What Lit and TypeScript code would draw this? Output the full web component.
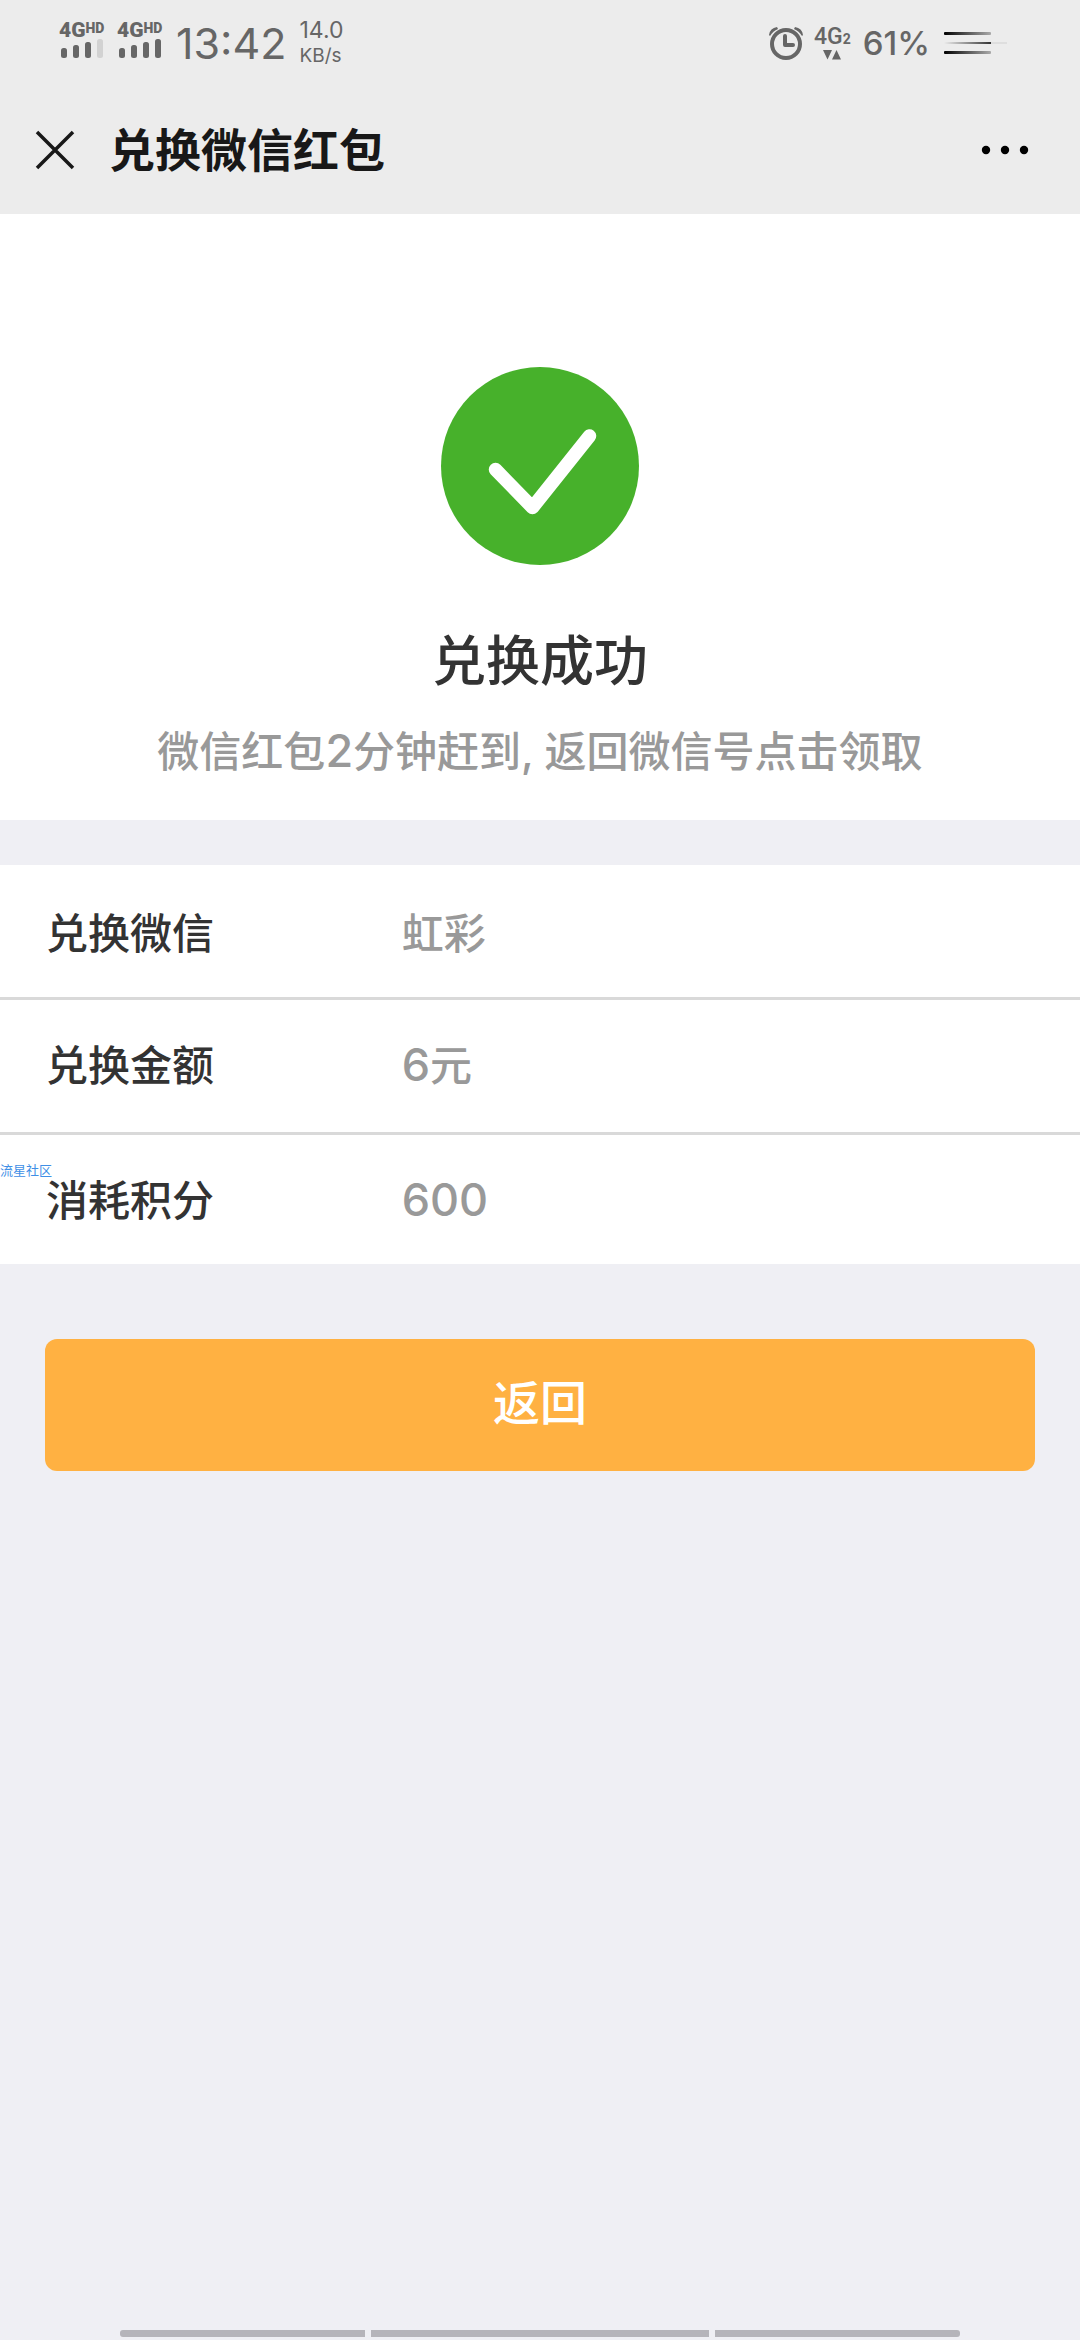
import { LitElement, html, css, svg } from "lit";
import { customElement, property } from "lit/decorators.js";

interface Detail {
  label: string;
  value: string;
  unit?: string;
  numeric?: boolean;
}

const DETAILS: Detail[] = [
  { label: "兑换微信", value: "虹彩" },
  { label: "兑换金额", value: "6", unit: "元", numeric: true },
  { label: "消耗积分", value: "600", numeric: true },
];

const BARS = [10, 13, 16, 19];

@customElement("signal-meter")
export class SignalMeter extends LitElement {
  @property({ type: Number }) level = 4;

  static styles = css`
    :host {
      display: block;
      color: #666;
      font-family: Roboto, sans-serif;
      font-weight: 900;
    }
    .net {
      display: flex;
      align-items: flex-start;
      height: 16px;
      font-size: 21px;
      line-height: 16px;
    }
    .hd {
      font-size: 14px;
      line-height: 12px;
    }
    svg {
      display: block;
    }
  `;

  render() {
    return html`
      <div class="net"><span>4G</span><span class="hd">HD</span></div>
      <svg width="46" height="20" viewBox="0 0 46 20" aria-hidden="true">
        ${BARS.map(
          (h, i) => svg`<rect x=${2 + i * 12} y=${20 - h} width="6" height=${h} rx="2.5"
            fill=${i < this.level ? "#666" : "#d2d2d2"}></rect>`
        )}
      </svg>
    `;
  }
}

@customElement("status-bar")
export class StatusBar extends LitElement {
  static styles = css`
    :host {
      display: flex;
      justify-content: space-between;
      height: 86px;
      box-sizing: border-box;
      padding: 0 73px 0 59px;
      color: #666;
      font-family: Inter, sans-serif;
      font-weight: 400;
    }
    .side {
      display: flex;
      align-items: center;
    }
    .meters {
      display: flex;
      gap: 12px;
      padding-bottom: 7px;
    }
    .time {
      margin-left: 13px;
      font-size: 43px;
      line-height: 44px;
    }
    .speed {
      display: flex;
      flex-direction: column;
      margin-left: 13px;
      font-size: 23px;
      line-height: 26px;
    }
    .unit {
      font-size: 19px;
    }
    .data {
      display: flex;
      flex-direction: column;
      align-items: center;
      margin: 0 12px 0 10px;
      font-family: Roboto, sans-serif;
      font-weight: 500;
      font-size: 23px;
      line-height: 22px;
    }
    .sub {
      font-size: 14px;
      font-weight: 700;
    }
    .percent {
      margin-right: 14px;
      font-size: 33px;
      line-height: 40px;
      font-weight: 500;
    }
    svg {
      display: block;
    }
  `;

  render() {
    return html`
      <div class="side">
        <div class="meters">
          <signal-meter .level=${3}></signal-meter>
          <signal-meter .level=${4}></signal-meter>
        </div>
        <span class="time">13:42</span>
        <div class="speed"><span>14.0</span><span class="unit">KB/s</span></div>
      </div>
      <div class="side">
        <svg width="36" height="36" viewBox="0 0 36 36" fill="none" stroke="#666" role="img" aria-label="闹钟">
          <circle cx="18" cy="19" r="14" stroke-width="4"></circle>
          <path d="M17 11v9h8" stroke-width="4" stroke-linejoin="round" stroke-linecap="round"></path>
          <path d="M1 10Q2 3 9 2L10 4Q5 6 2 11Z M35 10Q34 3 27 2L26 4Q31 6 34 11Z" fill="#666" stroke="none"></path>
        </svg>
        <div class="data">
          <span>4G<span class="sub">2</span></span>
          <svg width="18" height="10" viewBox="0 0 18 10" fill="#666" aria-hidden="true">
            <path d="M0 0h9L4.500 9.500Z M9 9.500h9L13.500 0Z"></path>
          </svg>
        </div>
        <span class="percent">61%</span>
        <svg width="63" height="24" viewBox="0 0 63 24" aria-hidden="true">
          <defs>
            <linearGradient id="edge"><stop stop-color="#000"></stop><stop offset="1" stop-color="#aaa"></stop></linearGradient>
            <linearGradient id="mid"><stop stop-color="#ececec"></stop><stop offset="1" stop-color="#333"></stop></linearGradient>
          </defs>
          <rect x="0" y="1" width="47" height="3" rx="1" fill="url(#edge)"></rect>
          <rect x="0" y="11" width="47" height="2" fill="url(#mid)"></rect>
          <rect x="47" y="11" width="16" height="2" fill="#dedede"></rect>
          <rect x="0" y="20" width="47" height="3" rx="1" fill="url(#edge)"></rect>
        </svg>
      </div>
    `;
  }
}

@customElement("app-root")
export class AppRoot extends LitElement {
  static styles = css`
    :host {
      display: flex;
      flex-direction: column;
      min-height: 100vh;
      background: #efeff4;
      color: #333;
      font-family: Inter, "Noto Sans CJK SC", sans-serif;
      font-size: 42px;
      font-weight: 500;
      line-height: 60px;
    }
    button {
      border: 0;
      padding: 0;
      background: none;
      font: inherit;
      color: inherit;
    }
    svg {
      display: block;
    }
    .top {
      background: #ececec;
    }
    .bar {
      display: flex;
      align-items: center;
      height: 128px;
      padding: 0 51px 0 35px;
    }
    h1,
    h2,
    p,
    dl,
    dd {
      margin: 0;
    }
    h1 {
      flex: 1;
      margin-left: 34px;
      color: #181818;
      font-size: 46px;
      font-weight: 700;
    }
    .result {
      display: flex;
      flex-direction: column;
      align-items: center;
      padding: 153px 40px 38px;
      background: #fff;
      text-align: center;
    }
    h2 {
      margin-top: 57px;
      font-size: 54px;
      line-height: 80px;
      font-weight: 500;
    }
    .note {
      margin-top: 20px;
      color: #999;
    }
    .num {
      font-size: 45px;
      line-height: 1;
    }
    .details {
      position: relative;
      margin-top: 45px;
      background: #fff;
    }
    .row {
      display: grid;
      grid-template-columns: 36% 1fr;
      align-items: center;
      padding: 36px 46px;
      border-bottom: 3px solid #d9d9d9;
    }
    .row:first-child {
      padding-top: 39px;
      padding-bottom: 33px;
    }
    .row:last-child {
      padding-bottom: 33px;
      border-bottom: 0;
    }
    dd {
      color: #999;
    }
    .tag {
      position: absolute;
      left: 0;
      top: 296px;
      color: #3f8fe6;
      font-size: 13px;
      line-height: 18px;
      font-weight: 400;
    }
    .actions {
      display: flex;
      padding: 75px 45px;
    }
    .back {
      flex: 1;
      padding: 28px 0 32px;
      border-radius: 12px;
      background: #ffb142;
      color: #fff;
      font-size: 47px;
      line-height: 72px;
    }
    .nav {
      display: grid;
      grid-template-columns: 245fr 338fr 245fr;
      gap: 6px;
      margin-top: auto;
      padding: 0 120px 3px;
    }
    .nav span {
      height: 7px;
      background: #b5b4ba;
    }
    .nav span:first-child {
      border-radius: 3px 0 0 3px;
    }
    .nav span:last-child {
      border-radius: 0 3px 3px 0;
    }
  `;

  render() {
    return html`
      <header class="top">
        <status-bar></status-bar>
        <div class="bar">
          <button aria-label="关闭">
            <svg width="40" height="40" viewBox="0 0 40 40" stroke="#181818" stroke-width="3.500">
              <path d="M2 2L38 38M38 2L2 38"></path>
            </svg>
          </button>
          <h1>兑换微信红包</h1>
          <button aria-label="更多">
            <svg width="48" height="10" viewBox="0 0 48 10">
              <circle cx="5" cy="5" r="4.200"></circle>
              <circle cx="24" cy="5" r="4.200"></circle>
              <circle cx="43" cy="5" r="4.200"></circle>
            </svg>
          </button>
        </div>
      </header>
      <main>
        <section class="result">
          <svg width="198" height="198" viewBox="0 0 198 198" aria-hidden="true">
            <circle cx="99" cy="99" r="99" fill="#47b12b"></circle>
            <path d="M54.500 102.500L91.500 140.500L148.500 69" fill="none" stroke="#fff" stroke-width="13.500"
              stroke-linecap="round" stroke-linejoin="round"></path>
          </svg>
          <h2>兑换成功</h2>
          <p class="note">微信红包<span class="num">2</span>分钟赶到, 返回微信号点击领取</p>
        </section>
        <section class="details">
          <dl>
            ${DETAILS.map(
              (d) => html`<div class="row">
                <dt>${d.label}</dt>
                <dd><span class=${d.numeric ? "num" : ""}>${d.value}</span>${d.unit ?? ""}</dd>
              </div>`
            )}
          </dl>
          <span class="tag">流星社区</span>
        </section>
        <div class="actions"><button class="back">返回</button></div>
      </main>
      <div class="nav" aria-hidden="true"><span></span><span></span><span></span></div>
    `;
  }
}
